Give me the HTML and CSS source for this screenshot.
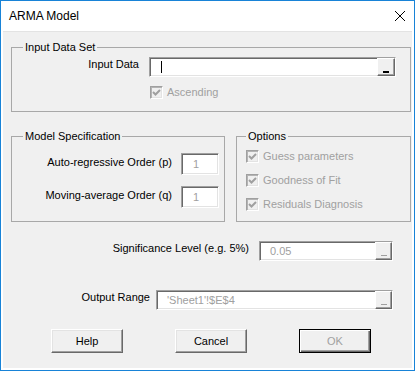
FILE: index.html
```html
<!DOCTYPE html>
<html>
<head>
<meta charset="utf-8">
<title>ARMA Model</title>
<link rel="stylesheet" href="styles.css">
</head>
<body>
<div class="window">
  <div class="titlebar">
    <span class="title">ARMA Model</span>
    <svg class="close" width="10" height="10" viewBox="0 0 10 10"><path d="M0 0L10 10M10 0L0 10" stroke="#000" stroke-width="1" fill="none"/></svg>
  </div>
  <div class="client">
    <fieldset class="group g-input">
      <legend>Input Data Set</legend>
      <div class="row r-input">
        <span class="lbl lbl-input">Input Data</span>
        <div class="box ref ref-input"><span class="caret"></span><span class="refbtn"><span class="dash"></span></span></div>
      </div>
      <div class="row chkrow r-asc">
        <span class="chk"><svg width="11" height="11" viewBox="0 0 11 11"><polyline points="2,5 4.5,7.5 9,3" fill="none" stroke="#a0a0a0" stroke-width="2"/></svg></span>
        <span class="dis">Ascending</span>
      </div>
    </fieldset>
    <div class="pair">
      <fieldset class="group g-model">
        <legend>Model Specification</legend>
        <div class="row r-p">
          <span class="lbl lbl-model">Auto-regressive Order (p)</span>
          <div class="box num">1</div>
        </div>
        <div class="row r-q">
          <span class="lbl lbl-model">Moving-average Order (q)</span>
          <div class="box num">1</div>
        </div>
      </fieldset>
      <fieldset class="group g-opts">
        <legend class="leg-opts">Options</legend>
        <div class="row chkrow r-o1">
          <span class="chk"><svg width="11" height="11" viewBox="0 0 11 11"><polyline points="2,5 4.5,7.5 9,3" fill="none" stroke="#a0a0a0" stroke-width="2"/></svg></span>
          <span class="dis">Guess parameters</span>
        </div>
        <div class="row chkrow r-o2">
          <span class="chk"><svg width="11" height="11" viewBox="0 0 11 11"><polyline points="2,5 4.5,7.5 9,3" fill="none" stroke="#a0a0a0" stroke-width="2"/></svg></span>
          <span class="dis">Goodness of Fit</span>
        </div>
        <div class="row chkrow r-o2">
          <span class="chk"><svg width="11" height="11" viewBox="0 0 11 11"><polyline points="2,5 4.5,7.5 9,3" fill="none" stroke="#a0a0a0" stroke-width="2"/></svg></span>
          <span class="dis">Residuals Diagnosis</span>
        </div>
      </fieldset>
    </div>
    <div class="row r-sig">
      <span class="lbl lbl-sig">Significance Level (e.g. 5%)</span>
      <div class="box ref ref-sig"><span class="val">0.05</span><span class="refbtn small"><span class="dash off"></span></span></div>
    </div>
    <div class="row r-out">
      <span class="lbl lbl-out">Output Range</span>
      <div class="box ref ref-out"><span class="val">'Sheet1'!$E$4</span><span class="refbtn small"><span class="dash off"></span></span></div>
    </div>
    <div class="buttons">
      <button class="btn">Help</button>
      <button class="btn">Cancel</button>
      <button class="btn btn-ok">OK</button>
    </div>
  </div>
</div>
</body>
</html>
```
FILE: styles.css
```css
* { box-sizing: border-box; }
html, body { margin: 0; padding: 0; background: #fff; }
body {
  font-family: "Liberation Sans", Arial, sans-serif;
  font-size: 11px;
  color: #000;
}
.window {
  width: 415px;
  height: 371px;
  border: 1px solid #1883d7;
  display: flex;
  flex-direction: column;
  background: #fff;
}
.titlebar {
  height: 30px;
  flex: none;
  display: flex;
  align-items: center;
  justify-content: space-between;
  padding: 0 9px 0 8px;
}
.title { font-size: 12px; line-height: 15px; }
.close { display: block; }
.client {
  flex: 1;
  margin: 0 2px 2px;
  background: #f0f0f0;
  border-top: 1px solid #e3e3e3;
  padding-left: 8px;
}
.group {
  margin: 0;
  padding: 0;
  border: 1px solid #a8a8a8;
  min-width: 0;
}
.group legend {
  margin-left: 11px;
  padding: 0 2px;
  line-height: 13px;
  font-size: 11px;
}
.group .leg-opts { margin-left: 9px; }
.row { display: flex; align-items: flex-start; }
.lbl { line-height: 13px; text-align: right; flex: none; white-space: nowrap; }
.box {
  flex: none;
  background: #fff;
  border: 1px solid;
  border-color: #a0a0a0 #fff #fff #a0a0a0;
  box-shadow: inset 1px 1px 0 #696969, inset -1px -1px 0 #e3e3e3;
}
.ref { height: 20px; display: flex; align-items: center; }
.caret { width: 1px; height: 12px; background: #000; margin-left: 11px; }
.val { color: #a0a0a0; padding-left: 10px; line-height: 13px; white-space: nowrap; }
.refbtn {
  margin-left: auto;
  width: 18px;
  height: 18px;
  background: #f0f0f0;
  border: 1px solid;
  border-color: #fff #696969 #696969 #fff;
  box-shadow: inset -1px -1px 0 #a0a0a0;
  display: flex;
  align-items: flex-end;
  justify-content: center;
  padding-bottom: 2px;
}
.refbtn.small { width: 17px; }
.dash { width: 6px; height: 2px; background: #000; }
.dash.off { background: #a0a0a0; height: 1px; margin-bottom: 1px; }

/* Input Data Set */
.g-input { width: 400px; margin-top: 9px; padding-bottom: 12px; }
.r-input { margin-top: 3px; }
.lbl-input { width: 127px; margin-right: 10px; margin-top: 1px; }
.ref-input { width: 247px; }
.chkrow { align-items: center; }
.chk {
  flex: none;
  width: 13px;
  height: 13px;
  border: 1px solid;
  border-color: #a0a0a0 #fff #fff #a0a0a0;
  box-shadow: inset 1px 1px 0 #b4b4b4, inset -1px -1px 0 #e3e3e3;
  background: #f0f0f0;
  margin-right: 4px;
}
.chk svg { display: block; }
.dis { color: #a0a0a0; line-height: 13px; white-space: nowrap; }
.r-asc { margin-top: 9px; margin-left: 138px; }

/* Model + Options */
.pair { display: flex; gap: 11px; margin-top: 18px; }
.g-model { width: 214px; padding-bottom: 13px; }
.g-opts { width: 175px; }
.r-p { margin-top: 10px; }
.r-q { margin-top: 11px; }
.lbl-model { width: 160px; margin-right: 9px; margin-top: 3px; }
.num {
  width: 38px;
  height: 22px;
  color: #a0a0a0;
  padding-left: 11px;
  line-height: 20px;
}
.r-o1 { margin-top: 7px; margin-left: 9px; }
.r-o2 { margin-top: 11px; margin-left: 9px; }

/* Significance / Output */
.r-sig { margin-top: 19px; }
.lbl-sig { width: 238px; margin-right: 10px; margin-top: 1px; }
.ref-sig { width: 134px; }
.r-out { margin-top: 29px; }
.lbl-out { width: 139px; margin-right: 6px; margin-top: 1px; }
.ref-out { width: 237px; }

/* Buttons */
.buttons { display: flex; gap: 52px; margin-top: 19px; padding-left: 40px; }
.btn {
  width: 72px;
  height: 24px;
  padding: 0;
  margin: 0;
  font-family: "Liberation Sans", Arial, sans-serif;
  font-size: 11px;
  color: #000;
  background: #f0f0f0;
  border: 1px solid;
  border-color: #fff #696969 #696969 #fff;
  box-shadow: inset -1px -1px 0 #a0a0a0, inset 1px 1px 0 #e3e3e3;
  border-radius: 0;
}
.btn-ok {
  color: #a0a0a0;
  border-color: #000;
  box-shadow: inset 1px 1px 0 #fff, inset -1px -1px 0 #696969, inset -2px -2px 0 #a0a0a0;
}
```
